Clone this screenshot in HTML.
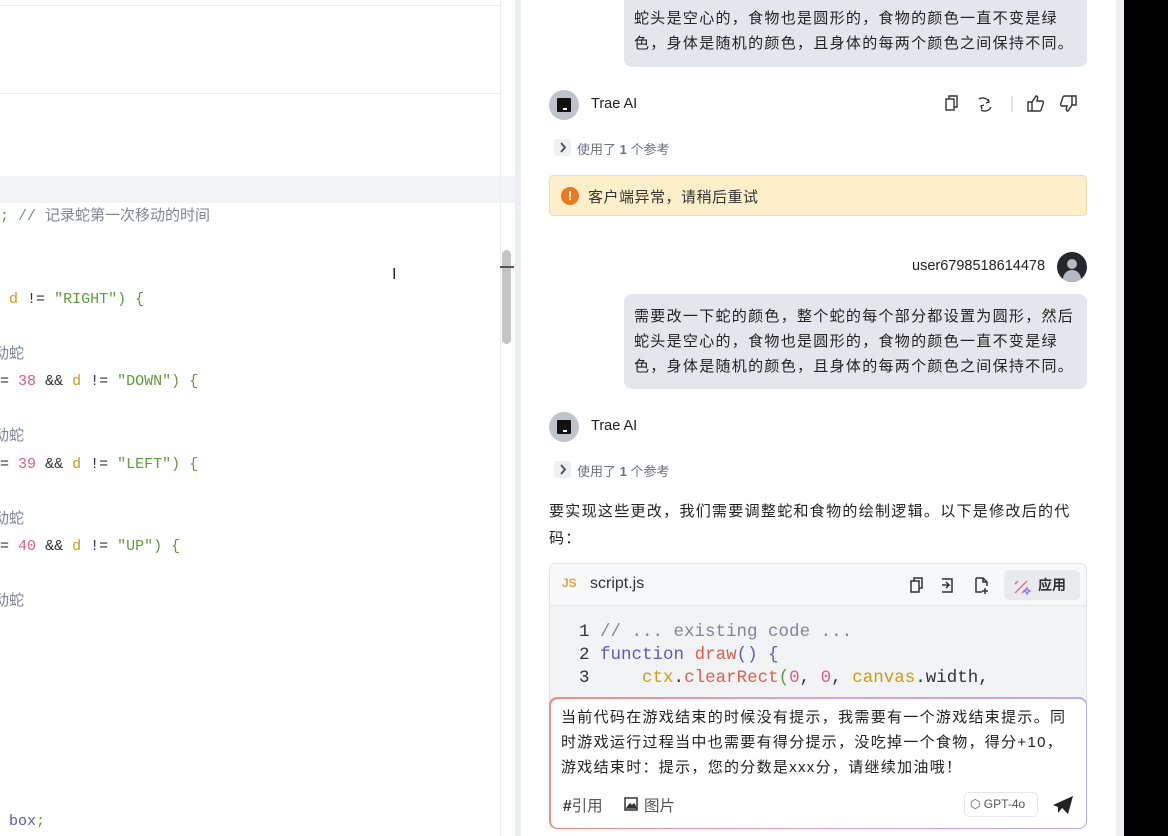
<!DOCTYPE html>
<html><head><meta charset="utf-8"><style>
*{margin:0;padding:0;box-sizing:border-box}
body{width:1168px;height:836px;position:relative;overflow:hidden;background:#fff;font-family:"Liberation Sans","Noto Sans CJK SC",sans-serif;color:#222}
.a{position:absolute;white-space:pre}
.m{font-family:"Liberation Mono","Noto Sans CJK SC",monospace;font-size:15px;line-height:20px}
.cm{color:#7d8797}.gr{color:#5a9e3a}.pk{color:#e05a8a}.yl{color:#d19a14}.dk{color:#333}.pu{color:#5a5ab8}
.t{font-size:15px;line-height:24px;color:#222;letter-spacing:1.3px}
.ref{font-size:13px;color:#6b7280}
.chev{position:absolute;width:17px;height:17px;background:#eef0f3;border-radius:3px}
.av{position:absolute;width:30px;height:30px;border-radius:50%;background:#bfc3cb}
.av i{position:absolute;left:8px;top:8px;width:14px;height:14px;background:#111;border-radius:1px}
.av i:after{content:"";position:absolute;left:6px;top:10px;width:4px;height:1.5px;background:#fff}
</style></head><body>
<!-- editor -->
<div class="a" style="left:0;top:5px;width:500px;height:1px;background:#ececec"></div>
<div class="a" style="left:0;top:93px;width:500px;height:1px;background:#ececec"></div>
<div class="a" style="left:0;top:176px;width:515px;height:27px;background:#f2f3f5"></div>
<div class="a" style="left:500px;top:0;width:1px;height:836px;background:#ececec"></div>
<div class="a" style="left:502px;top:250px;width:9px;height:94px;background:#c4c4c4;border-radius:5px"></div>
<div class="a" style="left:500px;top:266px;width:14px;height:2px;background:#555"></div>
<div class="a" style="left:515px;top:0;width:6px;height:836px;background:#eceef2"></div>
<div class="a" style="left:392px;top:266px;font-size:16px;color:#222">I</div>

<div class="a m" style="left:0;top:207px"><span class="gr">;</span> <span class="cm">// 记录蛇第一次移动的时间</span></div>
<div class="a m" style="left:0;top:290px"> <span class="yl">d</span> <span class="dk">!=</span> <span class="gr">"RIGHT") {</span></div>
<div class="a m cm" style="left:-6px;top:345px">动蛇</div>
<div class="a m" style="left:0;top:372px"><span class="dk">=</span> <span class="pk">38</span> <span class="dk">&amp;&amp;</span> <span class="yl">d</span> <span class="dk">!=</span> <span class="gr">"DOWN") {</span></div>
<div class="a m cm" style="left:-6px;top:427px">动蛇</div>
<div class="a m" style="left:0;top:455px"><span class="dk">=</span> <span class="pk">39</span> <span class="dk">&amp;&amp;</span> <span class="yl">d</span> <span class="dk">!=</span> <span class="gr">"LEFT") {</span></div>
<div class="a m cm" style="left:-6px;top:510px">动蛇</div>
<div class="a m" style="left:0;top:537px"><span class="dk">=</span> <span class="pk">40</span> <span class="dk">&amp;&amp;</span> <span class="yl">d</span> <span class="dk">!=</span> <span class="gr">"UP") {</span></div>
<div class="a m cm" style="left:-6px;top:592px">动蛇</div>
<div class="a m" style="left:0;top:812px"> <span class="pu">box</span><span class="gr">;</span></div>

<!-- right black -->
<div class="a" style="left:1116px;top:0;width:8px;height:836px;background:#eceef2"></div>
<div class="a" style="left:1124px;top:0;width:44px;height:836px;background:#000"></div>

<!-- bubble 1 -->
<div class="a" style="left:624px;top:-20px;width:463px;height:87px;background:#e3e6eb;border-radius:8px"></div>
<div class="a t" style="left:634px;top:-18px">需要改一下蛇的颜色，整个蛇的每个部分都设置为圆形，然后</div>
<div class="a t" style="left:634px;top:7px">蛇头是空心的，食物也是圆形的，食物的颜色一直不变是绿</div>
<div class="a t" style="left:634px;top:32px">色，身体是随机的颜色，且身体的每两个颜色之间保持不同。</div>

<div class="av" style="left:549px;top:90px"><i></i></div>
<div class="a" style="left:591px;top:96px;font-size:14.5px;color:#222">Trae AI</div>
<svg class="a" style="left:940px;top:94px" width="140" height="20" fill="none" stroke="#333" stroke-width="1.4">
<rect x="6" y="5" width="8" height="11"/><path d="M9 5V2h8v11h-3"/>
<path d="M39 5a7 7 0 0 1 10 3M51 13a7 7 0 0 1-10 3" /><path d="M48 5l1 3 -3 1M42 15l-1-3 3-1"/>
<path d="M72 2v16" stroke="#ddd"/>
<path d="M92 8v9h-4V8zM92 8l4-6c2 0 2 2 1 5h5c1 0 2 1 1 3l-2 6c0 1-1 1-2 1h-7"/>
<path d="M136 11V2h-4v9zM132 11l-4 6c-2 0-2-2-1-5h-5c-1 0-2-1-1-3l2-6c0-1 1-1 2-1h7"/>
</svg>
<div class="chev" style="left:554px;top:139px"></div>
<svg class="a" style="left:554px;top:139px" width="17" height="17" fill="none" stroke="#555" stroke-width="2"><path d="M7 4l4 4.5-4 4.5"/></svg>
<div class="a ref" style="left:577px;top:139px">使用了 <b>1</b> 个参考</div>

<div class="a" style="left:549px;top:175px;width:538px;height:41px;background:#fdefc9;border:1px solid #f6dca4;border-radius:4px"></div>
<div class="a" style="left:561px;top:187px;width:18px;height:18px;border-radius:50%;background:#ea7a22;color:#fff;font-size:13px;font-weight:bold;text-align:center;line-height:18px">!</div>
<div class="a" style="left:588px;top:186px;font-size:15px;color:#333;letter-spacing:0.5px">客户端异常，请稍后重试</div>

<div class="a" style="left:912px;top:258px;font-size:14.5px;color:#222">user6798518614478</div>
<div class="a" style="left:1057px;top:252px;width:30px;height:30px;border-radius:50%;background:#24272c;overflow:hidden"><div style="position:absolute;left:10px;top:7px;width:10px;height:10px;border-radius:50%;background:#b4b8bf"></div><div style="position:absolute;left:6px;top:18px;width:18px;height:12px;border-radius:9px 9px 0 0;background:#b4b8bf"></div></div>

<div class="a" style="left:624px;top:294px;width:463px;height:95px;background:#e3e6eb;border-radius:8px"></div>
<div class="a t" style="left:634px;top:305px">需要改一下蛇的颜色，整个蛇的每个部分都设置为圆形，然后</div>
<div class="a t" style="left:634px;top:330px">蛇头是空心的，食物也是圆形的，食物的颜色一直不变是绿</div>
<div class="a t" style="left:634px;top:355px">色，身体是随机的颜色，且身体的每两个颜色之间保持不同。</div>

<div class="av" style="left:549px;top:412px"><i></i></div>
<div class="a" style="left:591px;top:418px;font-size:14.5px;color:#222">Trae AI</div>
<div class="chev" style="left:554px;top:461px"></div>
<svg class="a" style="left:554px;top:461px" width="17" height="17" fill="none" stroke="#555" stroke-width="2"><path d="M7 4l4 4.5-4 4.5"/></svg>
<div class="a ref" style="left:577px;top:461px">使用了 <b>1</b> 个参考</div>

<div class="a t" style="left:549px;top:500px">要实现这些更改，我们需要调整蛇和食物的绘制逻辑。以下是修改后的代</div>
<div class="a t" style="left:549px;top:527px">码：</div>

<!-- code block -->
<div style="position:absolute;left:549px;top:563px;width:538px;height:140px;background:#f2f3f5;border:1px solid #e3e5e9;border-radius:6px 6px 0 0;overflow:hidden">
<div style="position:absolute;left:0;top:0;width:100%;height:42px;background:#f7f8fa;border-bottom:1px solid #e3e5e9"></div>
<div style="position:absolute;left:12px;top:12px;font-size:12px;font-weight:bold;color:#e8a13a">JS</div>
<div style="position:absolute;left:40px;top:11px;font-size:16px;color:#333">script.js</div>
<svg style="position:absolute;left:358px;top:11px" width="100" height="20" fill="none" stroke="#333" stroke-width="1.5">
<rect x="3" y="6" width="8" height="11"/><path d="M6 6V3h8v10h-3"/>
<path d="M34 4h10v13H34M34 10h7l-3-3M41 10l-3 3"/>
<path d="M68 3h7l4 4v4M68 3v14h6M75 3v4h4M77 13v6M74 16h6"/>
</svg>
<div style="position:absolute;left:454px;top:6px;width:76px;height:30px;background:#e8eaee;border-radius:5px"></div>
<svg style="position:absolute;left:462px;top:12px" width="20" height="20" fill="none" stroke="#e66b9a" stroke-width="1.5"><path d="M3 17L15 5M3 8l3-3M10 17l5-5"/><path d="M15 12l1 2 2 1-2 1-1 2-1-2-2-1 2-1z" stroke="#9a7cf0"/></svg>
<div style="position:absolute;left:488px;top:11px;font-size:14px;font-weight:bold;color:#333">应用</div>
<div class="m" style="position:absolute;left:29px;top:57px;font-size:17.5px;line-height:23px;white-space:pre"><span class="dk">1</span> <span class="cm">// ... existing code ...</span>
<span class="dk">2</span> <span class="pu">function</span> <span style="color:#e0604a">draw</span><span class="pu">() {</span>
<span class="dk">3</span>     <span class="yl">ctx</span><span class="dk">.</span><span style="color:#e0604a">clearRect</span><span class="gr">(</span><span class="pk">0</span><span class="dk">,</span> <span class="pk">0</span><span class="dk">,</span> <span class="yl">canvas</span><span class="dk">.width,</span></div>
</div>

<!-- input -->
<div style="position:absolute;left:549px;top:697px;width:538px;height:132px;border-radius:8px;background:linear-gradient(90deg,#f58b7a,#ee9ad0 50%,#b7a8f4);padding:1.5px"><div style="width:100%;height:100%;background:#fff;border-radius:7px"></div></div>
<div class="a t" style="left:561px;top:706px;color:#222">当前代码在游戏结束的时候没有提示，我需要有一个游戏结束提示。同</div>
<div class="a t" style="left:561px;top:731px;color:#222">时游戏运行过程当中也需要有得分提示，没吃掉一个食物，得分+10，</div>
<div class="a t" style="left:561px;top:756px;color:#222">游戏结束时：提示，您的分数是xxx分，请继续加油哦！</div>
<div class="a" style="left:563px;top:794px;font-size:15.5px;color:#555"><b style="color:#333">#</b>引用</div>
<svg class="a" style="left:624px;top:797px" width="14" height="14" fill="none" stroke="#333" stroke-width="1.5"><rect x="1" y="1" width="12" height="12"/><path d="M3 11l3-4 2 2 2-2 2 4z" fill="#333"/></svg>
<div class="a" style="left:644px;top:794px;font-size:15.5px;color:#555">图片</div>
<div class="a" style="left:964px;top:792px;width:74px;height:25px;border:1px solid #e5e7eb;border-radius:5px"></div>
<div class="a" style="left:970px;top:797px;font-size:12px;color:#555">⬡ GPT-4o</div>
<svg class="a" style="left:1051px;top:794px" width="24" height="22"><path d="M2 11L22 2 17 20 11 14 7 19 7 13z" fill="#222"/></svg>
</body></html>
